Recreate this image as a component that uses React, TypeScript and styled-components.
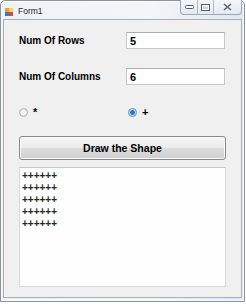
import React, { useState } from "react";
import styled, { createGlobalStyle } from "styled-components";

const GlobalStyle = createGlobalStyle`
  html, body {
    margin: 0;
    padding: 0;
    background: #ffffff;
  }
  body {
    width: 246px;
    height: 305px;
    overflow: hidden;
    font-family: "Liberation Sans", Arial, sans-serif;
  }
`;

const Window = styled.div`
  box-sizing: border-box;
  width: 245px;
  height: 302px;
  display: flex;
  flex-direction: column;
  border: 1px solid #8c939c;
  border-radius: 5px 5px 0 0;
  background: linear-gradient(90deg, #eef2f7 0%, #f3f6f9 60%, #dfe9f3 100%);
  box-shadow: inset 0 0 0 1px rgba(255, 255, 255, 0.7);
`;

const TitleBar = styled.div`
  height: 18px;
  display: flex;
  align-items: flex-start;
  padding-left: 4px;
`;

const AppIcon = styled.div`
  margin-top: 7px;
  width: 8px;
  height: 8px;
  display: grid;
  grid-template-columns: 1fr 1fr;
  grid-template-rows: 1fr 1fr;
  & > span:nth-child(1) {
    background: #e8a03c;
  }
  & > span:nth-child(2) {
    background: #f3d36a;
  }
  & > span:nth-child(3) {
    background: #3b78c8;
  }
  & > span:nth-child(4) {
    background: #d94a3a;
  }
`;

const Title = styled.span`
  margin-top: 5px;
  margin-left: 5px;
  font-size: 8.5px;
  color: #1e1e1e;
  flex: 1;
`;

const Controls = styled.div`
  display: flex;
  height: 14px;
  margin-right: 2px;
  margin-top: -1px;
  border: 1px solid #9aa7b6;
  border-top: none;
  border-radius: 0 0 4px 4px;
  background: linear-gradient(180deg, #f4f7fa 0%, #e3eaf2 100%);
  overflow: hidden;
`;

const CtrlButton = styled.div<{ $w: number }>`
  width: ${p => p.$w}px;
  display: flex;
  align-items: center;
  justify-content: center;
  border-left: 1px solid #aeb9c6;
  &:first-child {
    border-left: none;
  }
`;

const Client = styled.div`
  flex: 1;
  margin: 0 2px 3px 2px;
  border: 1px solid #a9afb6;
  background: #f0f0f0;
  padding: 12px 0 0 15px;
  display: flex;
  flex-direction: column;
`;

const FieldRow = styled.div<{ $gap: number }>`
  display: flex;
  align-items: center;
  height: 17px;
  margin-bottom: ${p => p.$gap}px;
`;

const Label = styled.span`
  width: 107px;
  font-size: 10px;
  font-weight: bold;
  color: #000;
`;

const Input = styled.input`
  box-sizing: border-box;
  width: 99px;
  height: 17px;
  border: 1px solid #c4c8ce;
  border-top-color: #abadb3;
  background: #fff;
  padding: 0 3px;
  font-family: "Liberation Sans", Arial, sans-serif;
  font-size: 11px;
  font-weight: bold;
  color: #000;
  outline: none;
`;

const RadioRow = styled.div`
  display: flex;
  align-items: center;
  height: 10px;
  margin-bottom: 19px;
`;

const RadioOption = styled.label<{ $w: number }>`
  width: ${p => p.$w}px;
  display: flex;
  align-items: center;
  gap: 5px;
  font-size: 11px;
  font-weight: bold;
  cursor: pointer;
`;

const RadioDot = styled.span<{ $on: boolean }>`
  box-sizing: border-box;
  width: 9px;
  height: 9px;
  border-radius: 50%;
  border: 1px solid ${p => (p.$on ? "#6a8cb0" : "#b5b5b5")};
  background: ${p =>
    p.$on
      ? "radial-gradient(circle, #1f7fc4 0 2px, #8fc2e6 2.5px, #e6eef6 3.5px)"
      : "radial-gradient(circle, #f4f4f4 0 2px, #dcdcdc 4px)"};
`;

const DrawButton = styled.button`
  box-sizing: border-box;
  width: 207px;
  height: 24px;
  margin-bottom: 7px;
  border: 1px solid #8a8a8a;
  border-radius: 3px;
  background: linear-gradient(
    180deg,
    #f6f6f6 0%,
    #ebebeb 48%,
    #dcdcdc 52%,
    #d0d0d0 100%
  );
  box-shadow: inset 0 0 0 1px #fbfbfb;
  font-family: "Liberation Sans", Arial, sans-serif;
  font-size: 10.5px;
  font-weight: bold;
  color: #000;
  padding: 0;
`;

const Output = styled.div`
  box-sizing: border-box;
  width: 207px;
  height: 120px;
  border: 1px solid #d6d9dd;
  border-top-color: #c4c8cd;
  background: #fff;
  padding: 2px 2px;
  font-size: 10px;
  font-weight: bold;
  line-height: 12px;
  color: #222;
  white-space: pre;
  opacity: 0.99;
`;

const App: React.FC = () => {
  const [rows, setRows] = useState<string>("5");
  const [cols, setCols] = useState<string>("6");
  const [symbol, setSymbol] = useState<string>("+");

  const r = parseInt(rows) || 0;
  const c = parseInt(cols) || 0;
  const shape = Array.from({ length: r }, () => symbol.repeat(c)).join("\n");

  return (
    <>
      <GlobalStyle />
      <Window>
        <TitleBar>
          <AppIcon>
            <span />
            <span />
            <span />
            <span />
          </AppIcon>
          <Title>Form1</Title>
          <Controls>
            <CtrlButton $w={16}>
              <svg width="9" height="4" viewBox="0 0 9 4">
                <rect x="0.5" y="0.5" width="8" height="3" rx="1" fill="#fff" stroke="#4f5a68" />
              </svg>
            </CtrlButton>
            <CtrlButton $w={15}>
              <svg width="9" height="7" viewBox="0 0 9 7">
                <rect x="0.5" y="0.5" width="8" height="6" fill="#fff" stroke="#4f5a68" />
                <rect x="2" y="2.5" width="5" height="2.5" fill="#c9d3df" />
              </svg>
            </CtrlButton>
            <CtrlButton $w={27}>
              <svg width="9" height="8" viewBox="0 0 9 8">
                <path d="M1 1 L8 7 M8 1 L1 7" stroke="#5a6573" strokeWidth="1.6" />
              </svg>
            </CtrlButton>
          </Controls>
        </TitleBar>
        <Client>
          <FieldRow $gap={19}>
            <Label>Num Of Rows</Label>
            <Input value={rows} onChange={e => setRows(e.target.value)} />
          </FieldRow>
          <FieldRow $gap={22}>
            <Label>Num Of Columns</Label>
            <Input value={cols} onChange={e => setCols(e.target.value)} />
          </FieldRow>
          <RadioRow>
            <RadioOption $w={109} onClick={() => setSymbol("*")}>
              <RadioDot $on={symbol === "*"} />
              *
            </RadioOption>
            <RadioOption $w={60} onClick={() => setSymbol("+")}>
              <RadioDot $on={symbol === "+"} />
              +
            </RadioOption>
          </RadioRow>
          <DrawButton>Draw the Shape</DrawButton>
          <Output>{shape}</Output>
        </Client>
      </Window>
    </>
  );
};

export default App;
